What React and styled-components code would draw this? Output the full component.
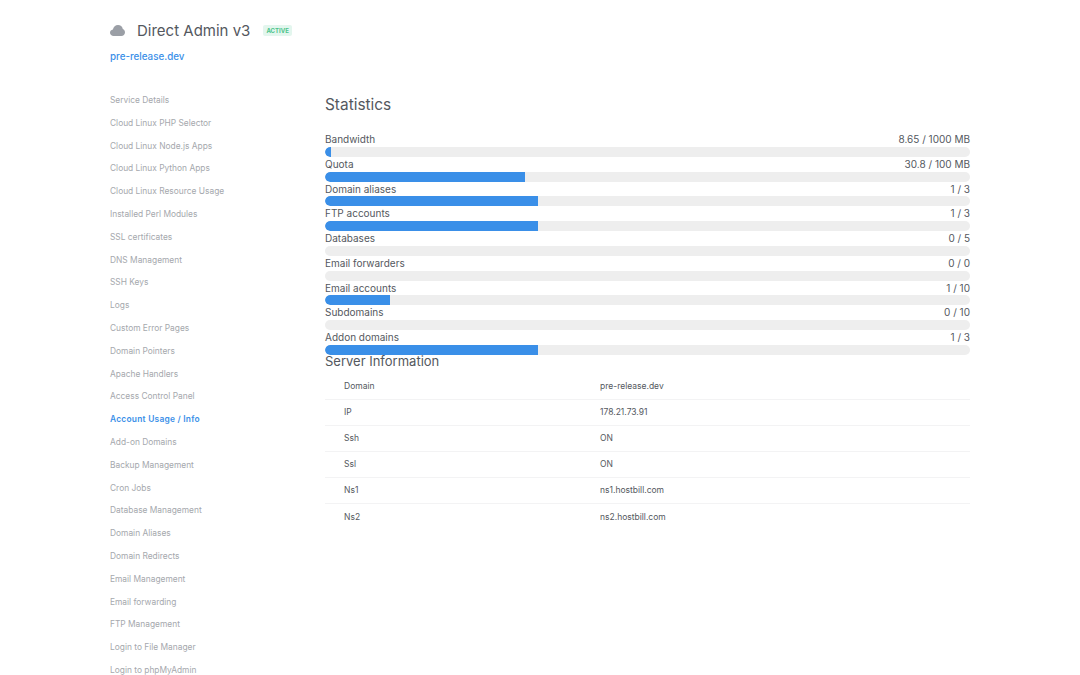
import React from 'react';
import styled, { createGlobalStyle } from 'styled-components';

const GlobalStyle = createGlobalStyle`
  html, body {
    margin: 0;
    height: 100%;
    overflow: hidden;
    background: #fff;
    font-family: Inter, "Noto Sans", sans-serif;
  }
`;

const Page = styled.div`
  padding: 20px 110px 0;
`;

const Header = styled.header`
  height: 69px;
`;

const TitleRow = styled.div`
  display: flex;
  align-items: center;
  height: 21px;
`;

const CloudIcon = styled.svg`
  width: 15px;
  height: 11px;
  margin-right: 12px;
  fill: #9b9fa6;
`;

const Title = styled.h1`
  margin: 0 13px 0 0;
  font-size: 15px;
  font-weight: 400;
  color: #54585e;
`;

const Badge = styled.span`
  padding: 2px 3px;
  border-radius: 2px;
  background: #e3f6ee;
  color: #4cc38a;
  font-size: 6px;
  font-weight: 700;
`;

const DomainLink = styled.a`
  display: block;
  margin-top: 10px;
  font-size: 9.8px;
  font-weight: 500;
  color: #3a8fe8;
`;

const Body = styled.div`
  display: grid;
  grid-template-columns: 215px 645px;
`;

const Nav = styled.nav`
  display: flex;
  flex-direction: column;
`;

const NavItem = styled.a`
  height: 22.8px;
  line-height: 22.8px;
  font-size: 8.4px;
  white-space: nowrap;
  color: ${p => (p.$active ? '#3a8fe8' : '#a5a8ad')};
  font-weight: ${p => (p.$active ? 600 : 400)};
  letter-spacing: ${p => (p.$active ? '0.25px' : '0')};
`;

const Main = styled.main`
  display: flex;
  flex-direction: column;
  padding-top: 7px;
`;

const Heading = styled.h2`
  margin: 0;
  font-size: 13px;
  line-height: 17px;
  font-weight: 400;
  color: #54585e;
`;

const StatsHeading = styled(Heading)`
  margin-bottom: 19px;
  font-size: 15.4px;
`;

const ServerHeading = styled(Heading)`
  margin-top: -2px;
`;

const Stat = styled.div`
  height: 24.75px;
`;

const StatLabels = styled.div`
  display: flex;
  justify-content: space-between;
  height: 14.75px;
  line-height: 15px;
  font-size: 10px;
  color: #54585e;
`;

const Track = styled.div`
  height: 10px;
  border-radius: 5px;
  background: #eeeeee;
  overflow: hidden;
`;

const Fill = styled.div`
  height: 100%;
  border-radius: 5px 0 0 5px;
  background: #3a8fe8;
`;

const InfoTable = styled.div`
  display: flex;
  flex-direction: column;
  margin-top: 4px;
`;

const InfoRow = styled.div`
  display: grid;
  grid-template-columns: 256px 1fr;
  height: 26px;
  box-sizing: border-box;
  padding-left: 19px;
  align-items: center;
  font-size: 8.5px;
  color: #54585e;
  border-bottom: 1px solid #f3f3f4;

  &:last-child {
    border-bottom: none;
  }
`;

const navItems = [
  'Service Details', 'Cloud Linux PHP Selector', 'Cloud Linux Node.js Apps', 'Cloud Linux Python Apps',
  'Cloud Linux Resource Usage', 'Installed Perl Modules', 'SSL certificates', 'DNS Management', 'SSH Keys',
  'Logs', 'Custom Error Pages', 'Domain Pointers', 'Apache Handlers', 'Access Control Panel',
  'Account Usage / Info', 'Add-on Domains', 'Backup Management', 'Cron Jobs', 'Database Management',
  'Domain Aliases', 'Domain Redirects', 'Email Management', 'Email forwarding', 'FTP Management',
  'Login to File Manager', 'Login to phpMyAdmin',
];

const stats = [
  { label: 'Bandwidth', value: '8.65 / 1000 MB', pct: 1 },
  { label: 'Quota', value: '30.8 / 100 MB', pct: 31 },
  { label: 'Domain aliases', value: '1 / 3', pct: 33 },
  { label: 'FTP accounts', value: '1 / 3', pct: 33 },
  { label: 'Databases', value: '0 / 5', pct: 0 },
  { label: 'Email forwarders', value: '0 / 0', pct: 0 },
  { label: 'Email accounts', value: '1 / 10', pct: 10 },
  { label: 'Subdomains', value: '0 / 10', pct: 0 },
  { label: 'Addon domains', value: '1 / 3', pct: 33 },
];

const serverInfo = [
  ['Domain', 'pre-release.dev'],
  ['IP', '178.21.73.91'],
  ['Ssh', 'ON'],
  ['Ssl', 'ON'],
  ['Ns1', 'ns1.hostbill.com'],
  ['Ns2', 'ns2.hostbill.com'],
];

const App = () => (
  <Page>
    <GlobalStyle />
    <Header>
      <TitleRow>
        <CloudIcon viewBox="0 0 15 11">
          <path d="M3.6 11C1.6 11 0 9.6 0 7.8c0-1.6 1.2-2.9 2.9-3.200C3.400 2 5.500 0 8 0c2.400 0 4.400 1.600 4.800 3.900 1.300.5 2.200 1.900 2.200 3.400C15 9.400 13.400 11 11.300 11H3.600z" />
        </CloudIcon>
        <Title>Direct Admin v3</Title>
        <Badge>ACTIVE</Badge>
      </TitleRow>
      <DomainLink>pre-release.dev</DomainLink>
    </Header>
    <Body>
      <Nav>
        {navItems.map(item => (
          <NavItem key={item} $active={item === 'Account Usage / Info'}>{item}</NavItem>
        ))}
      </Nav>
      <Main>
        <StatsHeading>Statistics</StatsHeading>
        {stats.map(s => (
          <Stat key={s.label}>
            <StatLabels>
              <span>{s.label}</span>
              <span>{s.value}</span>
            </StatLabels>
            <Track>
              <Fill style={{ width: `${s.pct}%` }} />
            </Track>
          </Stat>
        ))}
        <ServerHeading>Server Information</ServerHeading>
        <InfoTable>
          {serverInfo.map(([name, value]) => (
            <InfoRow key={name}>
              <span>{name}</span>
              <span>{value}</span>
            </InfoRow>
          ))}
        </InfoTable>
      </Main>
    </Body>
  </Page>
);

export default App;
